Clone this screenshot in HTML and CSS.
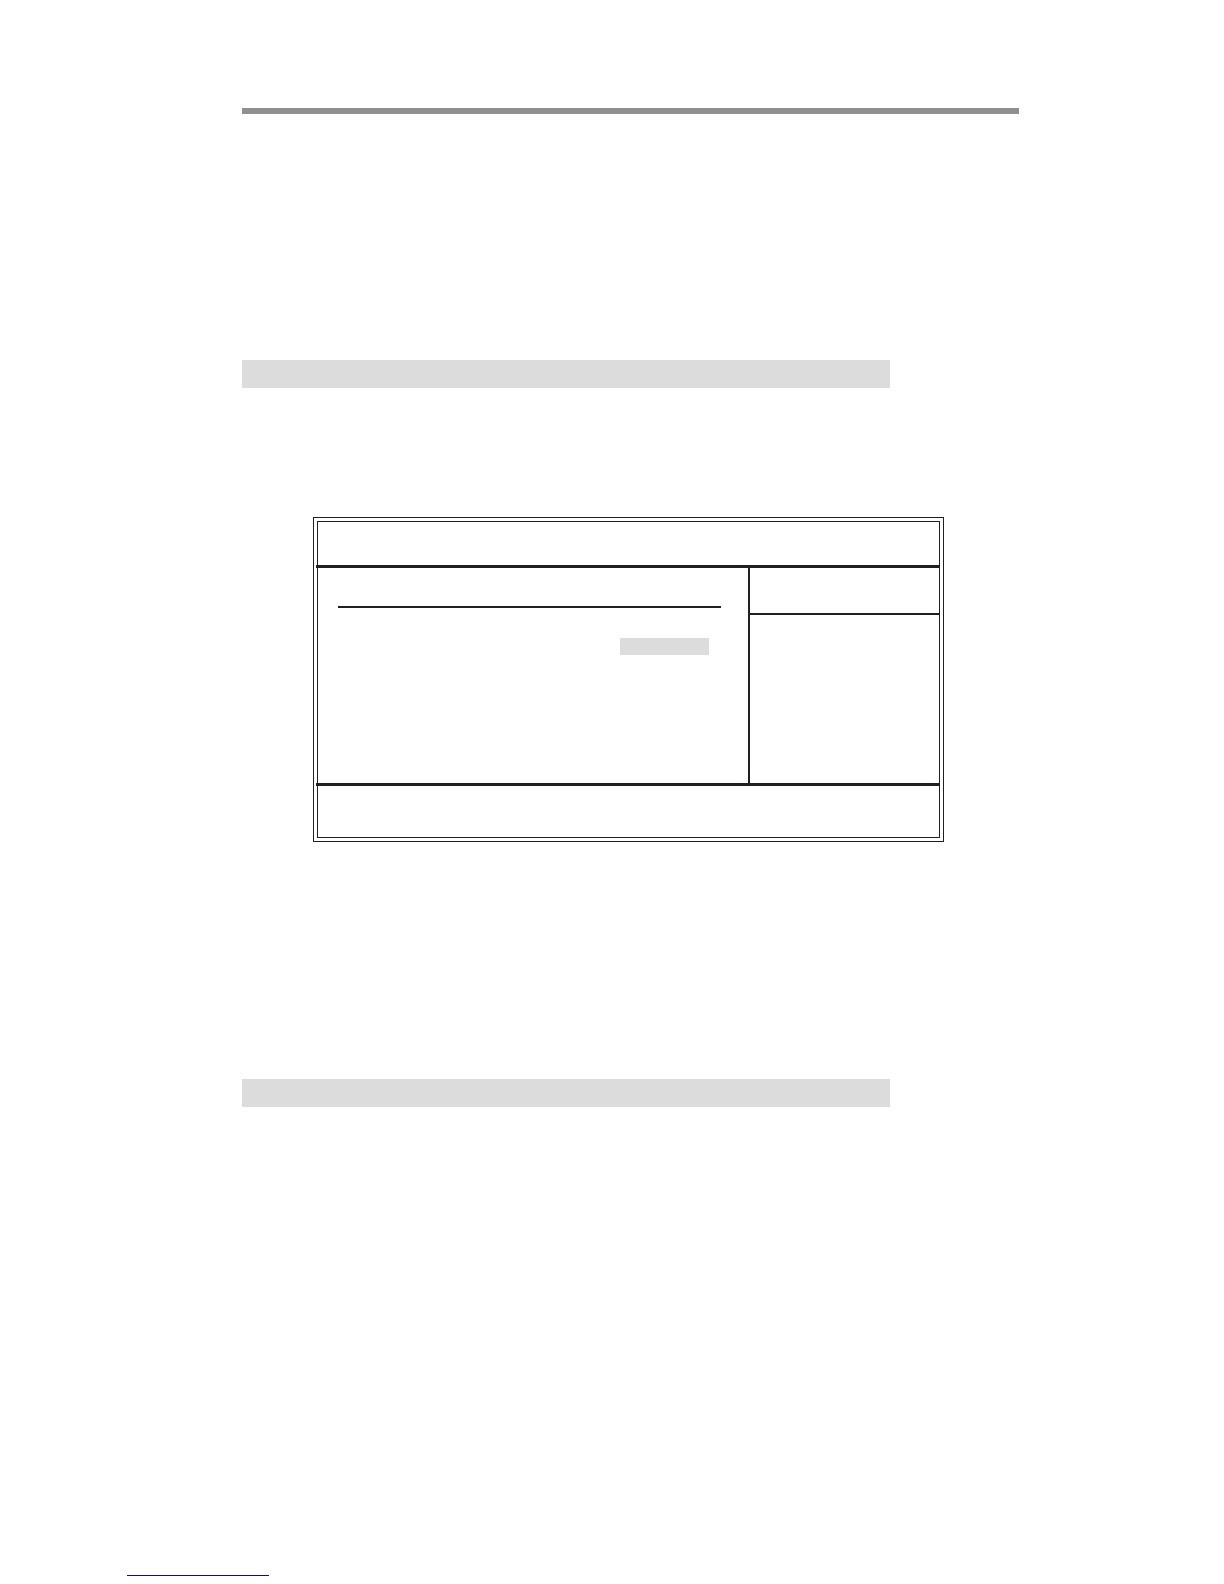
FILE: index.html
```
<!DOCTYPE html>
<html lang="en">
<head>
  <meta charset="UTF-8">
  <meta name="viewport" content="width=device-width, initial-scale=1.0">
  <title>Setup Utility</title>
  <link rel="stylesheet" href="styles.css">
</head>
<body>

  <main class="page">
    <hr class="page-rule">
    <div class="section-bar"></div>

    <!-- setup screen -->
    <div class="screen">
      <div class="screen-inner">
        <div class="screen-header"></div>
        <div class="screen-body">
          <div class="options">
            <div class="options-title"></div>
            <div class="option-value"></div>
          </div>
          <div class="help">
            <div class="help-title"></div>
          </div>
        </div>
        <div class="screen-footer"></div>
      </div>
    </div>

    <div class="section-bar"></div>
  </main>

  <footer class="page-footer">
    <a href="#" class="footer-link"></a>
  </footer>

</body>
</html>
```
FILE: styles.css
```
* {
  box-sizing: border-box;
}

body {
  font-family: "Liberation Sans", Arial, sans-serif;
  margin: 0;
  background-color: #fff;
  display: flex;
  flex-direction: column;
  min-height: 100vh;
}

.page {
  padding: 108px 205px 0 242px;
}

.page-rule {
  height: 6px;
  margin: 0 0 246px;
  border: 0;
  background-color: #8f8f8f;
}

.section-bar {
  max-width: 648px;
  height: 28px;
  background-color: #dcdcdc;
}

/* double frame */
.screen {
  margin: 129px 75px 237px 71px;
  padding: 3px;
  border: 1px solid #231f20;
}

.screen-inner {
  border: 1px solid #231f20;
}

.screen-header {
  height: 43px;
}

/* thick lines run over the inner frame */
.screen-body {
  display: flex;
  min-height: 221px;
  margin: 0 -1px 0 -2px;
  padding-left: 2px;
  padding-right: 1px;
  border-top: 3px solid #231f20;
  border-bottom: 3px solid #231f20;
}

.screen-footer {
  height: 51px;
}

.options {
  flex: 1;
  padding: 0 27px 0 20px;
}

.options-title {
  height: 40px;
  border-bottom: 2px solid #231f20;
}

.option-value {
  width: 89px;
  height: 17px;
  margin: 30px 12px 0 auto;
  background-color: #dcdcdc;
}

.help {
  width: 191px;
  border-left: 2px solid #231f20;
}

.help-title {
  height: 47px;
  border-bottom: 2px solid #231f20;
}

.page-footer {
  margin-top: auto;
  padding: 0 127px 8px;
}

.footer-link {
  display: block;
  width: 142px;
  border-bottom: 1px solid #0c0c8c;
}
```
